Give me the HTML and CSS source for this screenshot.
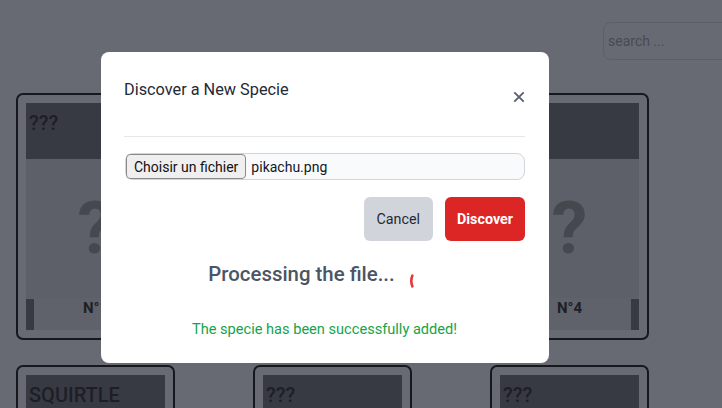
FILE: index.html
```html
<!DOCTYPE html>
<html lang="en">
<head>
<meta charset="utf-8">
<title>Pokedex</title>
<link rel="stylesheet" href="styles.css">
</head>
<body>
<div class="page">
  <header class="topbar">
    <input class="search" type="text" placeholder="search ...">
  </header>
  <main class="grid">
    <article class="card">
      <div class="card-head">???</div>
      <div class="card-img">?</div>
      <div class="card-foot"><i class="bar"></i><b>N°1</b><i class="bar off"></i></div>
    </article>
    <article class="card">
      <div class="card-head">???</div>
      <div class="card-img">?</div>
      <div class="card-foot"><i class="bar"></i><b>N°3</b><i class="bar off"></i></div>
    </article>
    <article class="card">
      <div class="card-head">???</div>
      <div class="card-img">?</div>
      <div class="card-foot"><i class="bar off"></i><b>N°4</b><i class="bar"></i></div>
    </article>
    <article class="card">
      <div class="card-head">SQUIRTLE</div>
      <div class="card-img">?</div>
      <div class="card-foot"><i class="bar"></i><b>N°7</b><i class="bar off"></i></div>
    </article>
    <article class="card">
      <div class="card-head">???</div>
      <div class="card-img">?</div>
      <div class="card-foot"><i class="bar"></i><b>N°8</b><i class="bar off"></i></div>
    </article>
    <article class="card">
      <div class="card-head">???</div>
      <div class="card-img">?</div>
      <div class="card-foot"><i class="bar"></i><b>N°9</b><i class="bar off"></i></div>
    </article>
  </main>
</div>

<div class="backdrop">
  <div class="modal">
    <div class="modal-head">
      <h2 class="modal-title">Discover a New Specie</h2>
      <button class="close" type="button" aria-label="Close">
        <svg width="12" height="12" viewBox="0 0 12 12"><path d="M1.3 1.3L10.7 10.7M10.7 1.3L1.3 10.7" stroke="#5b6270" stroke-width="1.9" fill="none"/></svg>
      </button>
    </div>
    <div class="file">
      <span class="file-btn">Choisir un fichier</span>
      <span class="file-name">pikachu.png</span>
    </div>
    <div class="actions">
      <button class="btn cancel" type="button">Cancel</button>
      <button class="btn discover" type="button">Discover</button>
    </div>
    <div class="processing">
      <span class="processing-text">Processing the file...</span>
      <svg class="spinner" width="32" height="32" viewBox="0 0 32 32"><path d="M3.4 10.6A14 14 0 0 0 3.4 21.4" stroke="#dc2626" stroke-width="2.6" stroke-linecap="round" fill="none" opacity="0.9"/></svg>
    </div>
    <p class="success">The specie has been successfully added!</p>
  </div>
</div>
</body>
</html>
```

FILE: styles.css
```css
* { box-sizing: border-box; }

html, body {
  margin: 0;
  overflow: hidden;
}

body {
  background: #676a72;
  font-family: Roboto, "Liberation Sans", Arial, sans-serif;
  color: #1d1f25;
}

.page {
  width: 803px;
  padding: 22px 0 0 16px;
}

.topbar {
  display: flex;
  justify-content: flex-end;
}

.search {
  width: 200px;
  height: 38px;
  padding: 0 4px;
  border: 1px solid #5c5f67;
  border-radius: 8px;
  background: #676a72;
  font-family: inherit;
  font-size: 14px;
  color: #46494f;
  outline: none;
}
.search::placeholder { color: #474a51; }

.grid {
  margin-top: 33px;
  display: grid;
  grid-template-columns: repeat(3, 159px);
  column-gap: 78px;
  row-gap: 25px;
}

.card {
  border: 2px solid #16181d;
  border-radius: 7px;
  padding: 8px;
}

.card-head {
  height: 56px;
  background: #373a42;
  padding: 8px 3px;
  font-size: 20px;
  font-weight: 500;
  color: #1d1f25;
}

.card-img {
  height: 139px;
  background: #5d6068;
  display: flex;
  align-items: center;
  justify-content: center;
  font-size: 72px;
  font-weight: 700;
  line-height: 72px;
  color: #45484f;
}

.card-foot {
  height: 32px;
  display: grid;
  grid-template-columns: 8px 1fr 8px;
  background: #5f626a;
}
.card-foot b {
  text-align: center;
  font-size: 15px;
  line-height: 20px;
  font-weight: 700;
  color: #1d1f25;
  align-self: start;
}
.bar {
  display: block;
  background: #373a42;
  margin-top: 1px;
}
.bar.off { background: transparent; }

.backdrop {
  position: fixed;
  inset: 0;
}

.modal {
  position: absolute;
  left: 101px;
  top: 52px;
  width: 448px;
  background: #fff;
  border-radius: 8px;
  padding: 26px 24px 24px 23px;
}

.modal-head {
  display: flex;
  justify-content: space-between;
  align-items: flex-start;
  padding-bottom: 33px;
  border-bottom: 1px solid #e5e7eb;
}

.modal-title {
  margin: 0;
  font-size: 16.3px;
  line-height: 24px;
  font-weight: 400;
  color: #1f2937;
}

.close {
  margin-top: 13px;
  padding: 0;
  border: 0;
  background: none;
  width: 12px;
  height: 12px;
  display: flex;
}

.file {
  margin-top: 16px;
  margin-left: 1px;
  height: 27px;
  display: flex;
  align-items: center;
  gap: 5px;
  border: 1px solid #d1d5db;
  border-radius: 8px;
  background: #f9fafb;
  font-size: 14px;
  color: #111827;
}

.file-btn {
  height: 25px;
  display: flex;
  align-items: center;
  padding: 0 7px;
  background: #efefef;
  border: 1px solid #8a8a8a;
  border-radius: 4px;
  color: #111;
}

.actions {
  margin-top: 17px;
  display: flex;
  justify-content: flex-end;
  gap: 12px;
}

.btn {
  height: 44px;
  padding: 0 13px;
  border: 0;
  border-radius: 6px;
  font-family: inherit;
  font-size: 14.3px;
  line-height: 20px;
}
.cancel {
  background: #d1d5db;
  color: #1f2937;
}
.discover {
  background: #dc2626;
  color: #fff;
  font-weight: 700;
  padding: 0 12px;
}

.processing {
  margin-top: 19px;
  display: flex;
  justify-content: center;
  align-items: flex-start;
  gap: 14px;
}
.processing-text {
  font-size: 20.4px;
  line-height: 28px;
  font-weight: 500;
  color: #4b5563;
}
.spinner { margin-top: 5px; }

.success {
  margin: 22px 0 0;
  text-align: center;
  font-size: 14.6px;
  line-height: 20px;
  color: #16a34a;
}
```
